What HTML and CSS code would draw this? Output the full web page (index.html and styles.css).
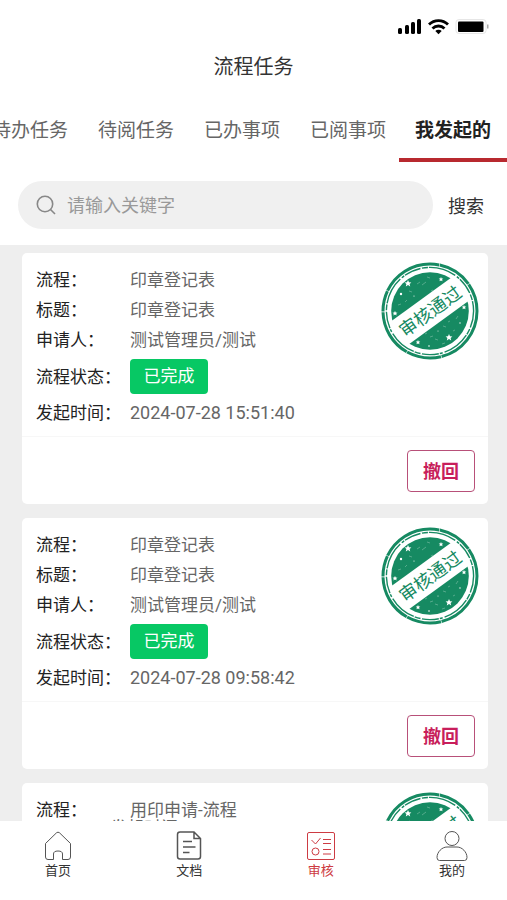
FILE: index.html
```html
<!DOCTYPE html>
<html lang="zh-CN">
  <head>
    <meta charset="utf-8">
    <meta name="viewport" content="width=device-width, initial-scale=1">
    <title>流程任务</title>
    <link rel="stylesheet" href="styles.css">
  </head>
  <body>
    <!-- shared stamp drawing -->
    <svg class="defs" width="0" height="0" aria-hidden="true">
      <symbol id="stamp" viewBox="0 0 98 98">
        <g fill="none" stroke="#168a62">
          <circle cx="49" cy="49" r="47" stroke-width="3" stroke-dasharray="62 .6 35 .5 48 .8 21 .5"/>
          <circle cx="49" cy="49" r="43.6" stroke-width="1.4" stroke-dasharray="17 1.5 6 1 28 2 3 1"/>
        </g>
        <circle cx="49" cy="49" r="38.8" fill="#168a62"/>
        <g fill="#fff">
          <path d="M27 18l1 2.2 2.4.2-1.8 1.6.6 2.4-2.2-1.3-2.2 1.3.6-2.4-1.8-1.6 2.4-.2zM60 15l.7 1.5 1.6.1-1.2 1 .4 1.7-1.5-.9-1.5.9.4-1.7-1.2-1 1.6-.1zM14 49l.8 1.6 1.7.1-1.3 1.1.4 1.8-1.6-1-1.6 1 .4-1.8-1.3-1.1 1.7-.1zM68 72l1 2.2 2.4.2-1.8 1.6.6 2.4-2.2-1.3-2.2 1.3.6-2.4-1.8-1.6 2.4-.2zM37 78l.7 1.5 1.6.1-1.2 1 .4 1.7-1.5-.9-1.5.9.4-1.7-1.2-1 1.6-.1zM83 43l.7 1.5 1.6.1-1.2 1 .4 1.7-1.5-.9-1.5.9.4-1.7-1.2-1 1.6-.1z"/>
          <circle cx="20" cy="32" r="1.2"/>
          <circle cx="33" cy="34" r=".6"/>
          <circle cx="48" cy="84" r=".8"/>
          <circle cx="79" cy="61" r=".7"/>
          <circle cx="57" cy="69" r=".5"/>
        </g>
        <path d="M36 22l3-2m2 3l4-3m1-5l3 1M28 29l3 1M24 40l2-2M17 43l3-1M50 29l2-1M62 64l3 1m2-5l2-1M54 77l3 1m-8-3l3-1M72 69l2-1M46 71l-2 1M61 82l3-1M75 57l2-3" stroke="#7fbfa8" stroke-width=".6" fill="none"/>
        <g transform="rotate(-36 49 49)">
          <rect x="9" y="34.5" width="80" height="29" fill="#fff"/>
          <text x="49" y="56" text-anchor="middle" class="stamp-text">审核通过</text>
        </g>
      </symbol>
    </svg>

    <header>
      <div class="status-bar">
        <svg width="92" height="20" viewBox="0 0 92 20" aria-hidden="true">
          <rect x="1" y="11" width="4" height="6" rx="1.5"/>
          <rect x="8" y="8" width="4" height="9" rx="1.5"/>
          <rect x="14" y="5" width="4" height="12" rx="1.5"/>
          <rect x="20" y="2" width="4" height="15" rx="1.5"/>
          <g fill="none" stroke="#000" stroke-width="2.8">
            <path d="M32 7.5a13.5 13.5 0 0 1 19 0"/>
            <path d="M35.5 11.5a8.5 8.5 0 0 1 12 0"/>
          </g>
          <path d="M38.3 14a4.5 4.5 0 0 1 6.4 0L41.5 17.2z"/>
          <rect x="59" y="2.5" width="30" height="14" rx="3" fill="#fff" stroke="#e6e6e6"/>
          <rect x="61" y="4.5" width="25.5" height="10.5" rx="1"/>
          <rect x="90" y="7.5" width="1.5" height="4" fill="#aaa"/>
        </svg>
      </div>
      <h1>流程任务</h1>
      <nav class="tabs">
        <a href="#">待办任务</a>
        <a href="#">待阅任务</a>
        <a href="#">已办事项</a>
        <a href="#">已阅事项</a>
        <a href="#" class="active">我发起的</a>
      </nav>
      <form class="search">
        <label class="search-box">
          <svg width="20" height="20" viewBox="0 0 20 20" fill="none" stroke="#888" stroke-width="1.6" aria-hidden="true">
            <circle cx="9" cy="9" r="7.7"/>
            <path d="M14.5 14.5l4.5 4.5"/>
          </svg>
          <input type="text" placeholder="请输入关键字" aria-label="请输入关键字">
        </label>
        <button type="button">搜索</button>
      </form>
    </header>

    <main>
      <article class="card">
        <svg class="stamp" role="img" aria-label="审核通过"><use href="#stamp"/></svg>
        <dl>
          <dt>流程：</dt><dd>印章登记表</dd>
          <dt>标题：</dt><dd>印章登记表</dd>
          <dt>申请人：</dt><dd>测试管理员/测试</dd>
          <dt>流程状态：</dt><dd><span class="badge">已完成</span></dd>
          <dt>发起时间：</dt><dd><time>2024-07-28 15:51:40</time></dd>
        </dl>
        <div class="card-footer">
          <button type="button" class="revoke">撤回</button>
        </div>
      </article>

      <article class="card">
        <svg class="stamp" role="img" aria-label="审核通过"><use href="#stamp"/></svg>
        <dl>
          <dt>流程：</dt><dd>印章登记表</dd>
          <dt>标题：</dt><dd>印章登记表</dd>
          <dt>申请人：</dt><dd>测试管理员/测试</dd>
          <dt>流程状态：</dt><dd><span class="badge">已完成</span></dd>
          <dt>发起时间：</dt><dd><time>2024-07-28 09:58:42</time></dd>
        </dl>
        <div class="card-footer">
          <button type="button" class="revoke">撤回</button>
        </div>
      </article>

      <article class="card">
        <svg class="stamp" role="img" aria-label="审核通过"><use href="#stamp"/></svg>
        <dl class="peek">
          <dt>流程：</dt><dd>用印申请-流程</dd>
        </dl>
        <p class="time-line">发起时间：<time>2024-08-05</time></p>
      </article>
    </main>

    <nav class="bottom-nav">
      <a href="#">
        <svg viewBox="0 0 30 30" aria-hidden="true">
          <path d="M2.5 12.5L13.5 1.8q1.5-1.3 3 0L27.5 12.5V26q0 2.5-2.5 2.5h-5.5V23q0-3-4.5-3t-4.5 3v5.5H5Q2.5 28.5 2.5 26z"/>
        </svg>
        首页
      </a>
      <a href="#">
        <svg viewBox="0 0 30 30" aria-hidden="true">
          <path d="M20 1H6Q3.5 1 3.5 3.5v22Q3.5 28 6 28h18q2.5 0 2.5-2.5V7.5zV7.5h6.500M9 10.5h9M9 16h12.5M9 21.5h6.5" stroke-width="1.5"/>
        </svg>
        文档
      </a>
      <a href="#" class="active">
        <svg viewBox="0 0 30 30" aria-hidden="true">
          <rect x="1.5" y="1.5" width="27" height="27" rx="1.5"/>
          <path d="M5.5 9l4 4 5-6M17 8.5h8M17 12.5h8M17 18.5h8M17 23h8"/>
          <circle cx="9.5" cy="20.5" r="3.5"/>
        </svg>
        审核
      </a>
      <a href="#">
        <svg class="wide" viewBox="0 0 32 30" aria-hidden="true">
          <circle cx="16" cy="7.5" r="7"/>
          <path d="M11 16h10c5 0 10 5 10 10.5q0 3-2.5 3h-25q-2.5 0-2.5-3C1 21 6 16 11 16z"/>
        </svg>
        我的
      </a>
    </nav>
  </body>
</html>
```
FILE: styles.css
```css
* {
  box-sizing: border-box;
}
body {
  margin: 0;
  height: 100vh;
  display: flex;
  flex-direction: column;
  overflow: hidden;
  background-color: #eee;
  color: #222;
  font-family: Roboto, "Noto Sans CJK SC", sans-serif;
  font-size: 18px;
}
a {
  color: inherit;
  text-decoration: none;
}
button {
  font-family: inherit;
  font-size: 18px;
  cursor: pointer;
}
.defs {
  position: absolute;
}
header {
  background-color: #fff;
}
.status-bar {
  display: flex;
  justify-content: flex-end;
  padding: 17px 18px 10px;
}
.status-bar svg {
  display: block;
}
h1 {
  margin: 0;
  font-size: 20px;
  font-weight: normal;
  line-height: 40px;
  text-align: center;
  color: #333;
}
.tabs {
  display: flex;
  justify-content: flex-end;
  overflow: hidden;
  margin-top: 17px;
}
.tabs a {
  flex: none;
  padding: 0 15px;
  font-size: 19px;
  line-height: 54px;
  color: #666;
  border-bottom: 4px solid transparent;
}
.tabs .active {
  margin-left: -2px;
  padding: 0 16px;
  font-weight: bold;
  color: #222;
  border-bottom-color: #b8292f;
}
.search {
  display: flex;
  align-items: center;
  padding: 19px 18px 16px;
}
.search-box {
  flex: 1;
  display: flex;
  align-items: center;
  height: 48px;
  padding: 0 18px;
  border-radius: 24px;
  background-color: #f0f0f0;
}
.search-box input {
  flex: 1;
  min-width: 0;
  margin-left: 11px;
  padding: 0;
  border: none;
  outline: none;
  background: none;
  font-family: inherit;
  font-size: 18px;
}
.search-box input::placeholder {
  color: #999;
}
.search button {
  padding: 0 5px 0 15px;
  border: none;
  background: none;
  color: #333;
}
main {
  flex: 1;
  min-height: 0;
  overflow: hidden;
  padding: 8px 19px 0 22px;
}
.card {
  position: relative;
  margin-bottom: 14px;
  border-radius: 5px;
  background-color: #fff;
}
.stamp {
  position: absolute;
  top: 9px;
  right: 9px;
  width: 98px;
  height: 98px;
}
.stamp-text {
  font-size: 18px;
  fill: #168a62;
}
dl {
  display: grid;
  grid-template-columns: 94px 1fr;
  grid-auto-rows: minmax(30px, auto);
  align-items: center;
  margin: 0;
  padding: 12px 14px 8px;
  font-size: 17px;
  line-height: 30px;
}
dt {
  white-space: nowrap;
}
dd {
  margin: 0;
  color: #666;
}
time {
  font-size: 18px;
}
.badge {
  display: block;
  width: 78px;
  margin: 4px 0;
  border-radius: 4px;
  background-color: #07c864;
  color: #fff;
  line-height: 35px;
  text-align: center;
}
.card-footer {
  display: flex;
  justify-content: flex-end;
  padding: 13px 13px 12px;
  border-top: 1px solid #f7f7f7;
}
.revoke {
  width: 68px;
  height: 42px;
  padding: 0 0 2px;
  border: 1px solid #b85079;
  border-radius: 4px;
  background-color: #fff;
  color: #c81e5b;
  font-weight: bold;
}
.peek {
  padding-bottom: 0;
}
.time-line {
  margin: 0;
  padding: 3px 0 0 88px;
  font-size: 17px;
  line-height: 0;
  color: #666;
}
.bottom-nav {
  position: relative;
  display: flex;
  justify-content: space-between;
  padding: 10px 40px 19px 43px;
  background-color: #fff;
}
.bottom-nav a {
  display: flex;
  flex-direction: column;
  align-items: center;
  width: 30px;
  font-size: 13px;
  line-height: 20px;
  color: #333;
  white-space: nowrap;
}
.bottom-nav svg {
  width: 30px;
  height: 30px;
  fill: none;
  stroke: #555;
}
.bottom-nav .wide {
  width: 32px;
}
.bottom-nav .active {
  color: #cd3b43;
}
.bottom-nav .active svg {
  stroke: #cd3b43;
}
```
